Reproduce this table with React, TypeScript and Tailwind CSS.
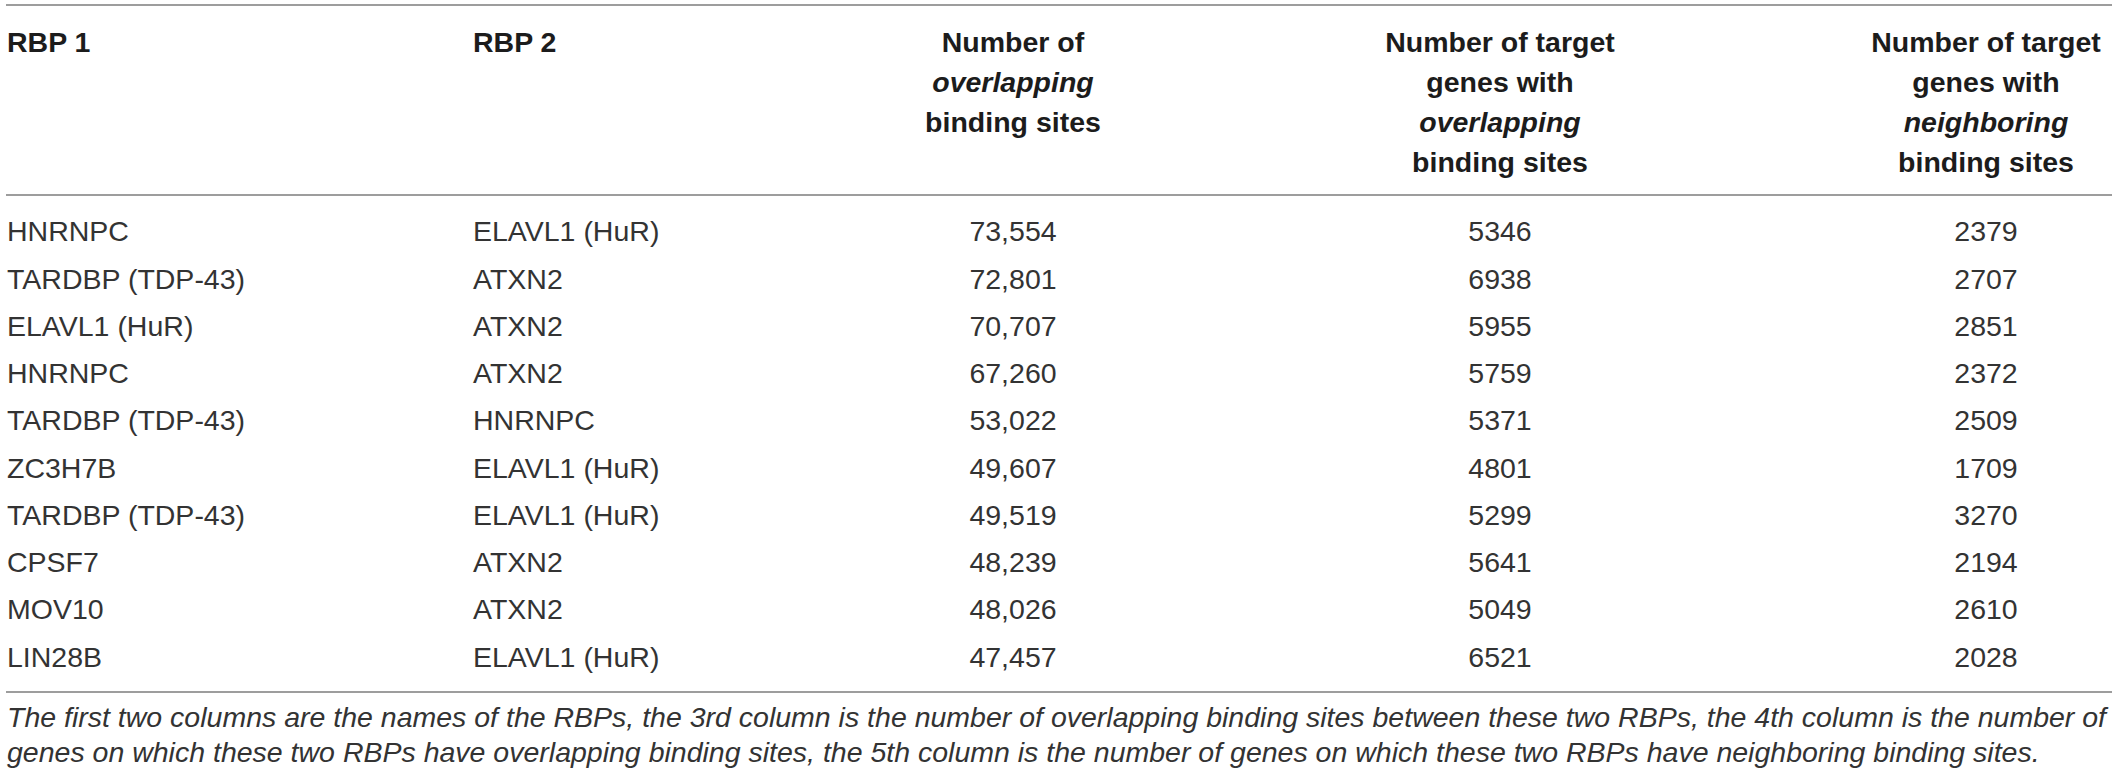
import React from "react";

const rows: [string, string, string, string, string][] = [
  ["HNRNPC", "ELAVL1 (HuR)", "73,554", "5346", "2379"],
  ["TARDBP (TDP-43)", "ATXN2", "72,801", "6938", "2707"],
  ["ELAVL1 (HuR)", "ATXN2", "70,707", "5955", "2851"],
  ["HNRNPC", "ATXN2", "67,260", "5759", "2372"],
  ["TARDBP (TDP-43)", "HNRNPC", "53,022", "5371", "2509"],
  ["ZC3H7B", "ELAVL1 (HuR)", "49,607", "4801", "1709"],
  ["TARDBP (TDP-43)", "ELAVL1 (HuR)", "49,519", "5299", "3270"],
  ["CPSF7", "ATXN2", "48,239", "5641", "2194"],
  ["MOV10", "ATXN2", "48,026", "5049", "2610"],
  ["LIN28B", "ELAVL1 (HuR)", "47,457", "6521", "2028"],
];

const grid = "grid grid-cols-[466px_288px_506px_468px_378px]";

export default function App() {
  return (
    <div
      className="w-[2121px] h-[778px] bg-white overflow-hidden pt-[4px] pl-[6px] text-[#333333]"
      style={{ fontFamily: '"Liberation Sans", Arial, sans-serif' }}
    >
      <div className="w-[2106px]">
        <div className="h-[2px] bg-[#9d9d9d]" />
        <div className={`${grid} pt-[16px] pb-[12px] text-[28.5px] leading-[40px] font-bold text-[#1c1c1c]`}>
          <div className="pl-[1px]">RBP 1</div>
          <div className="pl-[1px]">RBP 2</div>
          <div className="text-center whitespace-nowrap">
            Number of
            <br />
            <i>overlapping</i>
            <br />
            binding sites
          </div>
          <div className="text-center whitespace-nowrap">
            Number of target
            <br />
            genes with
            <br />
            <i>overlapping</i>
            <br />
            binding sites
          </div>
          <div className="text-center pl-[126px] whitespace-nowrap">
            Number of target
            <br />
            genes with
            <br />
            <i>neighboring</i>
            <br />
            binding sites
          </div>
        </div>
        <div className="h-[2px] bg-[#9d9d9d]" />
        <div className="pt-[12px] pb-[10px] text-[28.5px]">
          {rows.map((r, i) => (
            <div key={i} className={`${grid} h-[47.25px] items-center whitespace-nowrap`}>
              <div className="pl-[1px]">{r[0]}</div>
              <div className="pl-[1px]">{r[1]}</div>
              <div className="text-center">{r[2]}</div>
              <div className="text-center">{r[3]}</div>
              <div className="text-center pl-[126px]">{r[4]}</div>
            </div>
          ))}
        </div>
        <div className="h-[2px] bg-[#9d9d9d]" />
        <div className="pt-[7px] pl-[1px] text-[28.5px] leading-[35px] italic whitespace-nowrap">
          <div>
            The first two columns are the names of the RBPs, the 3rd column is the number of overlapping binding sites
            between these two RBPs, the 4th column is the number of
          </div>
          <div>
            genes on which these two RBPs have overlapping binding sites, the 5th column is the number of genes on
            which these two RBPs have neighboring binding sites.
          </div>
        </div>
      </div>
    </div>
  );
}
